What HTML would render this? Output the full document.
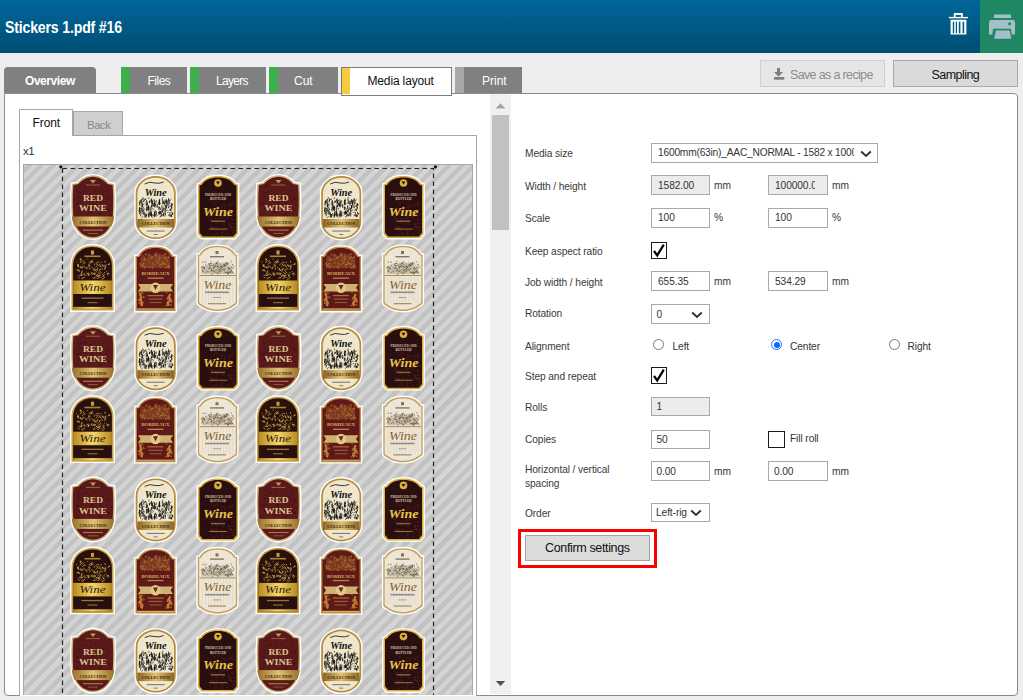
<!DOCTYPE html>
<html><head><meta charset="utf-8"><style>
*{box-sizing:border-box;margin:0;padding:0}
html,body{width:1023px;height:700px;overflow:hidden;background:#eeeeee;font-family:"Liberation Sans",sans-serif;position:relative}
.a{position:absolute;white-space:nowrap}
#hdr{left:0;top:0;width:1023px;height:53px;background:linear-gradient(#00669a,#004e74)}
#title{left:5px;top:17.6px;color:#fff;font-weight:bold;font-size:16.5px;letter-spacing:-0.2px;transform:scaleX(0.855);transform-origin:0 0}
#prn{left:980px;top:0;width:43px;height:53px;background:#1f8763}
.tab{position:absolute;top:67px;height:26px;background:#808080}
.tab .bar{position:absolute;left:0;top:0;width:9px;height:100%;background:#3cb04a}
.tt{position:absolute;font-size:12px;color:#fff;white-space:nowrap}
.btn{position:absolute;border:1px solid #b5b5b5;background:#dedede}
#panel{left:4px;top:93px;width:1014px;height:603px;background:#fff;border:1px solid #8a8a8a;border-radius:0 4px 4px 4px}
.lbl{position:absolute;left:525px;font-size:10.2px;color:#3a3a3a;letter-spacing:-0.1px;white-space:nowrap}
.inp{position:absolute;height:20px;border:1px solid #a9a9a9;background:#fff}
.inp.dis{background:#ececec}
.it{position:absolute;font-size:10.2px;color:#333;letter-spacing:-0.1px;white-space:nowrap}
.chk{position:absolute;width:16px;height:17px;border:1px solid #1a1a1a;background:#fff}
.rad{position:absolute;width:11px;height:11px;border:1px solid #777;border-radius:50%;background:#fff}
</style></head><body>
<div id="hdr" class="a"></div>
<div id="title" class="a">Stickers 1.pdf #16</div>
<div id="prn" class="a"></div>
<svg class="a" style="left:0;top:0" width="1023" height="53" viewBox="0 0 1023 53">
<g fill="#fff">
<path d="M953.8,13 h9 v3.9 h-1.8 v-2 h-5.4 v2 h-1.8z"/>
<rect x="948.8" y="16.9" width="19.2" height="1.4"/>
<path fill-rule="evenodd" d="M950.6,19.8 h15.8 v14.8 h-15.8z M952.8,21.8 v11.4 h1.4 v-11.4z M955.8,21.8 v11.4 h1.2 v-11.4z M958.8,21.8 v11.4 h1.6 v-11.4z M962.6,21.8 v11.4 h1.6 v-11.4z"/>
</g>
<g fill="#a3bfca">
<path d="M994.2,14.4 h16.6 l0.5,3.6 h-17.6z"/>
<path d="M992,19.9 h21 a2,2 0 0 1 2,2 v12.6 h-3.3 l-0.8,-5.7 h-17.8 l-0.8,5.7 h-3.3 v-12.6 a2,2 0 0 1 2,-2z"/>
<path d="M996,30.4 h13.6 l1.8,8.4 h-17.2z"/>
</g>
<circle cx="1009.6" cy="23.7" r="1.5" fill="#1f8763"/>
</svg>
<div class="tab" style="left:4px;width:92px;border-radius:4px 4px 0 0"></div>
<div class="tt" style="left:25px;top:74.1px;font-size:12px;font-weight:bold;letter-spacing:-0.45px">Overview</div>
<div class="tab" style="left:121px;width:66px"><div class="bar"></div></div>
<div class="tt" style="left:147.5px;top:74.1px;font-size:12px;letter-spacing:-0.5px">Files</div>
<div class="tab" style="left:190px;width:76px"><div class="bar"></div></div>
<div class="tt" style="left:216px;top:74.1px;font-size:12px;letter-spacing:-0.7px">Layers</div>
<div class="tab" style="left:269px;width:69px"><div class="bar"></div></div>
<div class="tt" style="left:294px;top:74.1px;font-size:12px;">Cut</div>
<div class="tab" style="left:455px;width:67px"><div class="bar" style="background:#a8a8a8"></div></div>
<div class="tt" style="left:482px;top:74.1px;font-size:12px;">Print</div>
<div class="btn" style="left:760px;top:60px;width:125px;height:27px;background:#e6e6e6;border-color:#cfcfcf"></div>
<svg class="a" style="left:773px;top:67px" width="13" height="14" viewBox="0 0 13 14"><path d="M4,1 h3 v4 h3 l-4.5,4.8 l-4.5,-4.8 h3z" fill="#808080"/><rect x="1" y="10" width="10.3" height="2.7" fill="#808080"/></svg>
<div class="tt" style="left:790px;top:67.9px;font-size:12.5px;color:#8c8c8c;letter-spacing:-0.65px">Save as a recipe</div>
<div class="btn" style="left:893px;top:60px;width:125px;height:27px;border-color:#a9a9a9;background:#dadada"></div>
<div class="tt" style="left:931.5px;top:67.9px;font-size:12.5px;color:#111;letter-spacing:-0.55px">Sampling</div>
<div id="panel" class="a"></div>
<div class="tab" style="left:341px;top:67px;width:111px;height:29px;background:#fff;border:1px solid #7c7c7c"><div class="bar" style="background:#f8c93a;left:0;top:0;width:8px;height:26px"></div></div>
<div class="tt" style="left:367.5px;top:74.1px;font-size:12px;color:#111;letter-spacing:-0.15px">Media layout</div>
<div class="a" style="left:490px;top:94px;width:21px;height:600px;background:#f0f0f0"></div>
<div class="a" style="left:492px;top:115px;width:17px;height:115px;background:#c1c1c1"></div>
<svg class="a" style="left:490px;top:94px" width="21" height="600" viewBox="0 0 21 600"><path d="M5.6,14.4 L10.5,9.2 L15.4,14.4z" fill="#a3a3a3"/><path d="M5.8,586.9 L15.2,586.9 L10.5,592z" fill="#505050"/></svg>
<div class="lbl" style="top:148.0px;">Media size</div>
<div class="inp" style="left:651px;top:143px;width:227px;height:20px"></div>
<div class="it" style="left:658px;top:147.4px;font-size:10.2px;width:196px;overflow:hidden;letter-spacing:-0.2px">1600mm(63in)_AAC_NORMAL - 1582 x 10000</div>
<svg class="a" style="left:859.5px;top:149.5px" width="12" height="8" viewBox="0 0 12 8"><path d="M1.2,1.5 L6,6 L10.8,1.5" fill="none" stroke="#333" stroke-width="2"/></svg>
<div class="lbl" style="top:180.9px;">Width / height</div>
<div class="inp dis" style="left:651px;top:175px;width:59px;height:20px"></div>
<div class="it" style="left:658px;top:180.2px;font-size:10.2px;">1582.00</div>
<div class="it" style="left:714px;top:180.2px;font-size:10.2px;">mm</div>
<div class="inp dis" style="left:768px;top:175px;width:60px;height:20px"></div>
<div class="it" style="left:775px;top:180.2px;font-size:10.2px;width:40px;overflow:hidden">100000.0</div>
<div class="it" style="left:832px;top:180.2px;font-size:10.2px;">mm</div>
<div class="lbl" style="top:212.8px;">Scale</div>
<div class="inp" style="left:651px;top:208px;width:59px;height:20px"></div>
<div class="it" style="left:658px;top:212.4px;font-size:10.2px;">100</div>
<div class="it" style="left:714px;top:212.0px;font-size:10.2px;">%</div>
<div class="inp" style="left:768px;top:208px;width:60px;height:20px"></div>
<div class="it" style="left:775px;top:212.4px;font-size:10.2px;">100</div>
<div class="it" style="left:832px;top:212.0px;font-size:10.2px;">%</div>
<div class="lbl" style="top:246.0px;">Keep aspect ratio</div>
<div class="chk" style="left:651px;top:242px;width:16px;height:17px"></div><svg class="a" style="left:651px;top:242px" width="16" height="17" viewBox="0 0 16 17"><path d="M3,9 L6.2,13.4 L12.8,2.6" fill="none" stroke="#000" stroke-width="2.2"/></svg>
<div class="lbl" style="top:277.0px;">Job width / height</div>
<div class="inp" style="left:651px;top:271px;width:59px;height:20px"></div>
<div class="it" style="left:658px;top:276.4px;font-size:10.2px;">655.35</div>
<div class="it" style="left:714px;top:276.2px;font-size:10.2px;">mm</div>
<div class="inp" style="left:768px;top:271px;width:60px;height:20px"></div>
<div class="it" style="left:775px;top:276.4px;font-size:10.2px;">534.29</div>
<div class="it" style="left:832px;top:276.2px;font-size:10.2px;">mm</div>
<div class="lbl" style="top:308.4px;">Rotation</div>
<div class="inp" style="left:651px;top:304px;width:59px;height:20px"></div>
<div class="it" style="left:656.5px;top:308.8px;font-size:10.2px;">0</div>
<svg class="a" style="left:691px;top:310.5px" width="12" height="8" viewBox="0 0 12 8"><path d="M1.2,1.5 L6,6 L10.8,1.5" fill="none" stroke="#333" stroke-width="2"/></svg>
<div class="lbl" style="top:341.4px;">Alignment</div>
<div class="rad" style="left:653px;top:339px"></div>
<div class="it" style="left:672.5px;top:341.1px;font-size:10.2px;">Left</div>
<div class="rad" style="left:771px;top:339px;border-color:#1d74ff"></div><div class="a" style="left:773.5px;top:341.5px;width:6px;height:6px;border-radius:50%;background:#0a6cff"></div>
<div class="it" style="left:790px;top:341.1px;font-size:10.2px;">Center</div>
<div class="rad" style="left:889px;top:339px"></div>
<div class="it" style="left:907.5px;top:341.1px;font-size:10.2px;">Right</div>
<div class="lbl" style="top:371.1px;">Step and repeat</div>
<div class="chk" style="left:651px;top:367px;width:16px;height:17px"></div><svg class="a" style="left:651px;top:367px" width="16" height="17" viewBox="0 0 16 17"><path d="M3,9 L6.2,13.4 L12.8,2.6" fill="none" stroke="#000" stroke-width="2.2"/></svg>
<div class="lbl" style="top:401.6px;">Rolls</div>
<div class="inp dis" style="left:651px;top:396.5px;width:59px;height:19px"></div>
<div class="it" style="left:656.5px;top:401.4px;font-size:10.2px;">1</div>
<div class="lbl" style="top:433.9px;">Copies</div>
<div class="inp" style="left:651px;top:429.5px;width:59px;height:19px"></div>
<div class="it" style="left:656.5px;top:433.6px;font-size:10.2px;">50</div>
<div class="chk" style="left:768px;top:431px;width:17px;height:17px"></div>
<div class="it" style="left:790px;top:432.7px;font-size:10.2px;">Fill roll</div>
<div class="lbl" style="top:463.6px;">Horizontal / vertical</div>
<div class="lbl" style="top:478.2px;">spacing</div>
<div class="inp" style="left:651px;top:461px;width:59px;height:20px"></div>
<div class="it" style="left:656.5px;top:466.1px;font-size:10.2px;">0.00</div>
<div class="it" style="left:714px;top:465.8px;font-size:10.2px;">mm</div>
<div class="inp" style="left:768px;top:461px;width:60px;height:20px"></div>
<div class="it" style="left:774px;top:466.1px;font-size:10.2px;">0.00</div>
<div class="it" style="left:832px;top:465.8px;font-size:10.2px;">mm</div>
<div class="lbl" style="top:507.6px;">Order</div>
<div class="inp" style="left:651px;top:502.5px;width:59px;height:19px"></div>
<div class="it" style="left:656px;top:506.8px;font-size:10.2px;width:31px;overflow:hidden">Left-right</div>
<svg class="a" style="left:689.5px;top:508.5px" width="12" height="8" viewBox="0 0 12 8"><path d="M1.2,1.5 L6,6 L10.8,1.5" fill="none" stroke="#333" stroke-width="2"/></svg>
<div class="a" style="left:518px;top:529px;width:139px;height:39px;border:3px solid #ff0000"></div>
<div class="btn" style="left:525px;top:535px;width:125px;height:26px;border-color:#a5a5a5;background:#dcdcdc"></div>
<div class="tt" style="left:545px;top:540.7px;font-size:12.5px;color:#111;letter-spacing:-0.35px">Confirm settings</div>
<div class="a" style="left:19px;top:135px;width:458px;height:561px;border:1px solid #a6a6a6;border-bottom:none;background:#fff"></div>
<div class="a" style="left:19px;top:109px;width:54px;height:27px;border:1px solid #a6a6a6;border-bottom:none;background:#fff"></div>
<div class="a" style="left:73px;top:111px;width:50px;height:24px;border:1px solid #a6a6a6;border-bottom:none;background:#cfcfcf"></div>
<div class="tt" style="left:32.5px;top:116.1px;font-size:12px;color:#111;letter-spacing:-0.1px">Front</div>
<div class="tt" style="left:87px;top:118.6px;font-size:11.5px;color:#8a8a8a;letter-spacing:-0.5px">Back</div>
<div class="tt" style="left:23px;top:144.6px;font-size:11.5px;color:#333;letter-spacing:-0.4px">x1</div>
<div class="a" style="left:23px;top:164px;width:450px;height:531px;background:repeating-linear-gradient(135deg,#d4d4d4 0,#d4d4d4 2.846px,#c2c2c2 2.846px,#c2c2c2 7.23px,#d4d4d4 7.23px,#d4d4d4 8.75px)"></div>
<svg class="a" style="left:23px;top:164px" width="450" height="531" viewBox="23 164 450 531">
<defs><linearGradient id="gg" x1="0" x2="1" y1="0" y2="0"><stop offset="0" stop-color="#8c6424"/><stop offset="0.5" stop-color="#e2c271"/><stop offset="1" stop-color="#8c6424"/></linearGradient><linearGradient id="gy" x1="0" x2="1" y1="0" y2="0"><stop offset="0" stop-color="#b88a22"/><stop offset="0.5" stop-color="#f5d66a"/><stop offset="1" stop-color="#b88a22"/></linearGradient><pattern id="st" patternUnits="userSpaceOnUse" x="0" y="0" width="12.375" height="12.375"><rect x="-1" y="-1" width="15" height="15" fill="#d4d4d4"/><polygon points="5.9,-0.5 12.1,-0.5 -0.5,12.1 -0.5,5.9" fill="#c2c2c2"/><polygon points="12.875,4.9 12.875,11.1 11.1,12.875 4.9,12.875" fill="#c2c2c2"/></pattern><clipPath id="c1"><path d="M24,1.8 C30.5,2 36,5 39.5,9.5 L45,10.5 C45.8,21 45.8,31 45.2,42 C44.2,56 35,65.2 24,65.2 C13,65.2 3.8,56 2.8,42 C2.2,31 2.2,21 3,10.5 L8.5,9.5 C12,5 17.5,2 24,1.8Z"/></clipPath><g id="t1">
<path d="M24,1.8 C30.5,2 36,5 39.5,9.5 L45,10.5 C45.8,21 45.8,31 45.2,42 C44.2,56 35,65.2 24,65.2 C13,65.2 3.8,56 2.8,42 C2.2,31 2.2,21 3,10.5 L8.5,9.5 C12,5 17.5,2 24,1.8Z" fill="#cdb074" stroke="#fff" stroke-width="2.8" paint-order="stroke"/>
<path d="M24,1.8 C30.5,2 36,5 39.5,9.5 L45,10.5 C45.8,21 45.8,31 45.2,42 C44.2,56 35,65.2 24,65.2 C13,65.2 3.8,56 2.8,42 C2.2,31 2.2,21 3,10.5 L8.5,9.5 C12,5 17.5,2 24,1.8Z" fill="#5a1a1c" transform="translate(24,33.5) scale(0.935,0.955) translate(-24,-33.5)"/>
<path d="M22.3,28.8l2.1,-0.2M24.3,29.6l-1.6,0.1M28.7,35.8l-2.0,-1.0M9.3,36.3l1.0,-2.3M41.4,40.9l0.8,0.6M11.7,12.5l0.1,-2.2M12.8,19.3l-2.3,-0.2M21.9,37.3l0.1,0.7M24.0,31.9l-0.2,-1.1M41.9,41.9l1.7,1.0M17.3,18.9l-1.1,-2.1M33.6,24.0l1.7,-0.6M40.5,37.4l-2.5,-1.5M38.8,26.1l2.4,-0.5M8.6,30.9l1.4,-1.2M9.1,22.0l2.3,1.3M10.2,19.4l-2.0,-2.2M34.7,17.3l0.3,-0.3M12.9,34.0l-1.8,0.7M10.2,24.6l-1.4,-1.2M41.0,36.1l-1.0,1.9M13.6,23.8l1.8,0.7M9.6,41.7l-1.4,-1.2M33.8,21.9l-1.0,-2.1M9.2,29.5l-1.3,0.5M19.4,25.6l2.3,-0.1M26.7,38.0l-1.6,-1.7M38.7,36.5l-1.3,-1.6M32.6,40.2l-1.5,2.3M37.8,30.1l-0.4,-2.0M7.4,40.9l-1.3,1.0M15.3,36.7l0.5,-1.0M12.3,33.6l-2.2,-1.4M26.1,37.6l0.6,-1.1M39.0,18.1l-2.4,-1.2M22.0,13.8l-1.6,-0.7M26.6,15.9l-0.7,2.0M41.3,31.7l1.0,0.4M11.1,13.1l-2.4,2.1M31.2,40.9l-2.4,0.7M23.4,33.9l-0.9,2.5M8.7,28.4l1.2,2.0M32.5,33.1l1.5,2.1M18.7,32.6l2.0,1.9M21.0,35.7l1.8,0.4M28.5,23.5l0.4,0.5M8.9,31.2l2.5,1.9M32.2,23.7l1.2,0.4M21.9,37.2l-2.1,1.3M7.1,30.0l-0.1,-1.3M31.1,26.9l0.6,2.1M15.2,12.3l-1.0,0.9M13.3,17.1l2.0,0.8M21.9,38.8l-0.9,0.8M13.1,24.9l1.5,2.1M37.7,23.5l0.4,-0.9M10.9,26.9l1.7,1.7M31.6,40.5l-1.1,-1.7M22.2,20.3l-1.4,-0.4M28.5,26.8l-0.9,1.7M41.4,25.6l-2.1,-2.3M37.4,13.2l1.0,0.4M17.1,35.7l-2.4,-1.8M22.4,12.7l1.6,-1.3M11.1,13.4l0.6,-0.3M28.7,31.7l1.5,2.3M30.6,18.0l-0.1,-1.6M6.4,26.2l1.1,-1.6M15.8,22.4l1.0,0.1M28.1,34.7l-0.5,1.5" stroke="#360a0c" stroke-width="0.9" opacity="0.7" fill="none"/>
<g clip-path="url(#c1)"><rect x="0" y="43" width="48" height="10" fill="url(#gg)"/></g>
<path d="M21,6.5 h6 l-3,3.5z" fill="#c09a50"/>
<rect x="17" y="11" width="14" height="1" fill="#a07a40" opacity="0.8"/>
<text x="24" y="27.5" font-family="Liberation Serif" font-weight="bold" font-size="9" fill="#dcc48c" text-anchor="middle" textLength="20" lengthAdjust="spacingAndGlyphs">RED</text>
<text x="24" y="37.8" font-family="Liberation Serif" font-weight="bold" font-size="9" fill="#dcc48c" text-anchor="middle" textLength="28" lengthAdjust="spacingAndGlyphs">WINE</text>
<text x="24" y="50.8" font-family="Liberation Serif" font-weight="bold" font-size="4.8" fill="#2a1808" text-anchor="middle" textLength="27" lengthAdjust="spacingAndGlyphs">COLLECTION</text>
<rect x="14" y="56" width="20" height="1.2" fill="#c08a50" opacity="0.8"/>
<rect x="19" y="59.5" width="10" height="0.9" fill="#c08a50" opacity="0.6"/>
</g><g id="t2">
<rect x="2" y="2" width="40" height="63" rx="20" ry="17" fill="#b48a3c" stroke="#fff" stroke-width="2.8" paint-order="stroke"/>
<rect x="3.7" y="3.7" width="36.6" height="59.6" rx="18.3" ry="15.4" fill="#efe6cc"/>
<path d="M11,10 q5,-3 10,-1 q4,1 9,-1" stroke="#222" stroke-width="0.9" fill="none"/>
<text x="22" y="21.5" font-family="Liberation Serif" font-style="italic" font-weight="bold" font-size="11" fill="#111" text-anchor="middle" textLength="22" lengthAdjust="spacingAndGlyphs">Wine</text>
<path d="M26.1,36.6l0.3,3.9M29.9,39.7l-0.5,2.7M36.6,35.0l0.4,1.8M21.0,28.2l0.0,2.9M5.9,27.7l-0.2,3.8M30.8,26.7l0.3,1.8M25.9,26.2l-0.5,3.7M12.4,27.7l0.5,3.7M15.0,40.3l0.0,3.2M12.3,40.0l0.2,3.9M35.0,29.1l-0.1,1.9M10.3,25.1l-0.2,3.0M5.6,35.5l-0.2,2.3M32.5,32.2l-0.2,2.7M28.8,25.0l0.5,1.6M30.2,38.4l-0.5,3.5M17.6,33.8l-0.5,1.6M11.5,40.2l-0.3,3.4M36.2,40.0l-0.2,2.4M22.8,37.2l-0.4,3.4M31.8,38.6l-0.5,3.9M8.5,29.8l0.1,3.8M16.7,39.7l0.0,2.3M16.0,27.0l-0.4,1.9M28.2,40.9l-0.3,1.6M38.1,33.1l-0.1,2.1M25.1,38.0l-0.0,2.6M7.3,39.6l-0.5,2.7M33.2,26.2l0.2,3.9M26.3,37.4l-0.4,2.6M10.4,38.4l-0.2,2.6M38.5,38.5l0.5,2.6M21.6,36.4l-0.0,2.2M18.8,26.5l-0.1,4.0M37.2,34.7l-0.0,2.3M8.4,28.6l0.3,3.7M17.4,37.4l0.3,3.2M27.4,36.9l-0.1,3.3M14.8,32.3l0.3,3.2M15.2,40.1l0.1,3.0M5.9,33.3l-0.2,3.2M20.8,37.9l0.1,3.5M17.0,34.9l0.2,3.6M17.1,38.3l0.4,3.2M37.7,40.3l0.0,2.8M11.0,38.2l0.4,2.7M28.3,36.2l0.2,1.9M31.3,33.9l0.2,2.6M26.1,37.2l0.1,3.3M6.4,26.7l-0.1,3.1M12.7,35.7l0.1,1.6M21.1,27.8l-0.4,1.8M16.0,27.1l-0.3,1.6M20.9,30.5l0.1,3.0M13.3,39.4l-0.5,2.5M14.7,31.0l-0.4,3.6M17.8,24.6l0.1,1.7M23.5,29.8l0.1,3.9M32.5,31.1l0.3,3.1M17.7,26.4l0.1,2.9M37.1,40.5l0.1,2.4M35.0,24.0l-0.4,2.9M25.8,26.4l0.1,3.7M17.9,31.3l-0.3,2.2M37.6,30.5l0.5,3.8M25.2,28.4l0.5,2.7M19.2,29.4l0.5,2.7M15.0,32.1l-0.4,3.1M20.1,29.0l0.3,3.6M5.9,33.1l-0.2,3.8M31.3,28.2l-0.2,1.9M38.1,29.0l0.1,2.7M26.8,34.3l0.2,1.8M30.6,29.1l0.0,2.3M15.3,33.0l-0.0,2.4M30.1,34.0l-0.5,2.1M20.5,39.6l0.4,2.9M6.0,37.2l-0.1,2.9M28.9,34.7l-0.0,3.8M18.2,30.7l0.4,2.0M15.3,38.1l-0.4,3.6M28.4,31.4l-0.2,3.5M35.6,26.4l-0.0,2.9M21.9,29.6l-0.3,3.0M32.3,25.2l-0.3,3.5M31.6,35.3l-0.5,3.3M37.8,41.0l0.2,1.6M33.3,27.7l0.1,3.9M29.0,26.3l-0.2,3.8M10.4,34.4l-0.1,1.9M26.0,24.7l-0.4,2.4M7.9,25.0l0.1,3.4M34.5,26.3l-0.1,2.3M25.3,32.3l0.4,2.4M7.3,35.9l-0.3,3.1M22.2,39.5l0.1,3.1M14.2,33.4l-0.2,3.4M22.6,26.3l-0.3,2.4M29.8,27.0l0.2,3.1M8.3,35.4l-0.4,1.8M25.1,28.1l0.4,2.7M16.2,37.5l-0.5,3.3M7.3,26.6l0.5,3.2M12.9,26.0l0.5,3.2M32.6,26.4l0.1,2.4M13.3,29.7l0.1,2.4M18.2,26.3l0.3,3.1M32.0,31.4l0.4,2.8M25.1,33.7l0.2,2.5M8.7,24.6l-0.3,1.6M34.8,32.2l0.3,1.5M21.0,39.1l0.1,2.6M20.9,25.7l-0.3,1.9M17.9,30.6l0.4,1.9M13.9,28.7l-0.3,2.2M13.3,32.2l-0.5,3.8M17.7,39.9l0.2,3.2M21.1,40.1l-0.4,3.2M15.1,35.5l0.2,1.9M12.1,24.4l-0.3,1.7" stroke="#0a0a0a" stroke-width="0.8" opacity="0.95" fill="none"/><path d="M31.4,39.8l-0.1,-1.0M6.0,36.9l-0.1,1.1M17.9,38.9l-1.0,1.3M29.4,32.5l0.2,0.8M12.2,35.0l1.3,-1.0M31.7,37.3l1.5,-0.7M9.0,39.4l1.3,-0.2M9.0,28.5l0.6,-0.9M36.4,35.6l-1.3,0.7M17.5,41.8l1.8,0.1M26.6,37.6l1.3,2.1M6.9,31.5l0.4,-0.9M24.9,26.6l1.7,0.1M9.7,36.9l-0.8,-1.3M21.5,27.5l-1.3,1.6M28.3,25.2l1.2,-2.1M16.7,41.3l0.5,-0.9M18.1,32.0l-1.6,2.2M7.7,32.6l1.1,-0.4M37.4,29.4l2.1,1.7M27.4,41.0l-0.2,1.5M31.5,34.3l-0.1,0.9M19.1,26.5l1.1,-1.0M21.6,39.1l-1.4,-2.1M10.0,35.6l-0.6,-1.1M20.4,41.7l-1.1,-0.4M34.1,36.0l-1.0,-0.1M21.3,27.6l-0.5,-0.9M31.8,30.8l0.7,2.1M35.5,31.8l0.5,-0.8M18.7,33.8l1.3,1.9M15.3,25.1l-0.2,-1.9M7.0,38.9l-1.7,1.0M17.6,41.9l1.6,-1.9M12.2,42.1l0.5,-0.3M31.0,39.6l-0.0,-0.1M9.2,31.5l-1.6,0.6M25.4,27.6l0.6,-1.8M9.4,36.6l-0.2,1.8M26.1,37.6l-1.6,1.5M8.7,36.1l1.8,1.8M34.6,33.1l0.9,1.3M10.4,42.0l1.8,-0.3M30.9,33.0l-1.0,0.9M8.0,39.4l2.1,-0.9M36.1,26.5l1.6,-1.0M36.9,32.8l1.9,-2.1M8.7,39.7l0.6,0.2M7.0,28.1l-0.6,-2.0M37.8,38.8l2.0,0.9M17.0,26.4l1.0,-1.7M23.5,33.4l-0.0,-1.9M8.4,34.4l-2.1,0.1M10.8,30.1l-1.5,0.3M18.4,29.0l-1.2,0.3M35.1,32.5l-1.5,-0.8M13.7,35.3l1.3,0.3M12.0,30.9l-0.5,-0.3M18.7,43.0l0.2,0.7M28.9,36.6l1.3,-0.6M27.3,42.5l-1.5,0.6M18.3,26.1l-2.0,1.1M9.7,37.8l-1.8,-0.6M7.0,34.8l1.3,-1.2M24.1,41.6l-0.9,-0.1M29.2,40.6l-1.5,0.7M9.8,27.0l2.1,-2.0M35.4,38.5l0.8,1.0M26.8,30.2l-0.2,-1.3M33.5,39.0l1.3,-1.3M25.0,29.6l1.3,1.1M37.8,37.7l0.8,1.2M9.0,35.7l-2.1,-0.6M9.7,42.1l-2.1,1.9M36.3,32.8l1.5,-2.0M10.5,25.2l-1.9,-2.2M32.5,26.6l0.4,-1.0M10.2,32.5l-1.4,2.1M18.3,35.7l0.3,0.6M21.4,29.9l-1.6,1.7M12.2,33.1l1.4,0.3M36.3,39.6l0.1,-1.7M25.0,33.5l1.6,0.1M28.2,39.6l-0.1,1.5M34.8,27.8l1.8,1.6M33.4,31.1l-1.1,-1.6M17.9,40.4l-0.6,-2.2M15.8,26.5l0.5,1.2M35.7,26.6l-0.5,-1.6M35.1,40.1l0.1,2.0" stroke="#111" stroke-width="0.7" opacity="0.9" fill="none"/>
<rect x="3.7" y="45" width="36.6" height="8.5" fill="url(#gg)"/>
<text x="22" y="51.3" font-family="Liberation Serif" font-weight="bold" font-size="4.6" fill="#2a1a08" text-anchor="middle" textLength="28" lengthAdjust="spacingAndGlyphs">COLLECTION</text>
<rect x="13" y="56.5" width="18" height="1.1" fill="#333" opacity="0.6"/>
<rect x="20" y="60" width="4" height="1" fill="#333" opacity="0.6"/>
</g><g id="t3">
<path d="M22,2.5 C30,2.5 36,5 39.5,10 L42,11 L42,60.5 L38.5,64.5 L5.5,64.5 L2,60.5 L2,11 L4.5,10 C8,5 14,2.5 22,2.5Z" fill="#d9ae3a" stroke="#fff" stroke-width="2.8" paint-order="stroke"/>
<path d="M22,2.5 C30,2.5 36,5 39.5,10 L42,11 L42,60.5 L38.5,64.5 L5.5,64.5 L2,60.5 L2,11 L4.5,10 C8,5 14,2.5 22,2.5Z" fill="#2a0f10" transform="translate(22,33.5) scale(0.925,0.952) translate(-22,-33.5)"/>
<path d="M18.5,49.6l0.7,-0.1M19.8,53.7l1.5,0.1M27.6,31.4l-2.5,-0.6M29.8,24.8l1.5,-1.3M20.3,23.7l2.5,1.2M37.6,46.6l-2.3,-0.9M27.4,26.6l2.3,-0.7M18.2,54.7l-1.9,2.1M26.2,44.1l-0.8,-0.1M19.0,23.5l1.8,-1.3M35.1,30.3l2.3,2.0M34.4,52.5l0.4,1.1M17.3,41.1l1.6,-1.5M38.9,57.5l-0.5,-0.7M26.2,37.4l2.5,-0.6M14.7,25.7l1.1,2.5M27.4,41.7l0.3,1.2M20.0,46.4l0.3,0.6M18.9,28.8l-0.8,2.1M23.4,45.9l-1.0,-2.0M15.8,54.5l1.4,-0.6M32.5,49.0l2.0,2.3M25.0,61.6l2.3,0.5M37.8,41.6l-0.6,-1.3M37.7,28.5l-2.2,1.5M34.9,41.3l1.7,-2.2M21.0,33.6l-0.4,-1.6M15.9,35.5l2.0,2.4M34.1,41.2l-1.2,2.3M28.2,51.1l-2.4,-1.4M36.6,53.8l1.9,0.5M25.5,45.2l1.7,-1.0M28.4,33.0l1.3,-2.4M32.5,60.2l-2.4,0.5M31.4,56.1l0.4,-1.2M25.0,60.3l2.0,-1.8M16.6,25.8l-2.4,-0.3M17.8,56.7l0.8,-1.9M28.5,35.0l-0.0,-1.4M18.5,29.4l-0.6,1.0M28.9,23.8l1.1,1.9M34.9,53.6l-2.5,-0.2M15.7,52.6l-1.6,1.1M20.8,49.9l-0.9,-2.3M24.5,34.4l2.0,-1.0M27.6,44.0l2.2,-2.0M30.2,42.3l1.2,2.3M22.4,50.0l0.1,0.3M15.7,54.6l2.4,-0.7M22.6,61.7l-2.0,-2.1M16.0,54.6l1.3,-0.3M30.8,22.8l0.7,-0.3M28.0,37.6l-0.5,-1.4M15.3,39.4l-1.3,1.0M36.1,51.0l-0.2,-1.3M24.4,41.5l0.7,2.3M16.3,41.2l-0.0,1.1M38.0,53.2l0.6,1.3M32.0,56.4l1.0,0.9M20.6,58.7l-0.6,0.6M36.3,60.5l2.4,-2.5M22.4,34.5l-0.5,-1.8M28.9,25.2l-1.0,2.2M34.0,40.5l-2.0,2.3M33.0,30.2l-0.8,0.7M32.4,32.4l2.3,-0.9M20.9,55.8l-1.7,0.9M19.4,45.9l-1.1,-0.6M39.4,40.7l-0.3,0.6M21.6,29.0l-0.6,-1.1M19.1,60.4l-2.3,1.6M39.2,50.2l-2.4,0.0M15.1,46.3l1.0,-1.3M14.2,43.8l-2.0,-1.0M26.3,57.8l-0.6,-1.8M35.4,54.9l0.1,-2.3M19.1,38.1l0.3,-1.4M35.7,55.7l2.1,1.9M14.5,45.3l-2.1,2.0M34.2,52.4l-1.6,-2.2" stroke="#6e2626" stroke-width="0.8" opacity="0.75" fill="none"/>
<circle cx="22" cy="9.5" r="3.8" fill="#d8b040"/>
<path d="M20,8 h4 l-2,3z" fill="#2a0f10"/>
<text x="22" y="22" font-family="Liberation Serif" font-weight="bold" font-size="3.8" fill="#d8c8a8" text-anchor="middle" textLength="26" lengthAdjust="spacingAndGlyphs">PRODUCED AND</text>
<text x="22" y="26.5" font-family="Liberation Serif" font-weight="bold" font-size="3.8" fill="#d8c8a8" text-anchor="middle" textLength="16" lengthAdjust="spacingAndGlyphs">BOTTLED</text>
<text x="22" y="42" font-family="Liberation Serif" font-style="italic" font-weight="bold" font-size="13" fill="#e6c24a" text-anchor="middle" textLength="30" lengthAdjust="spacingAndGlyphs">Wine</text>
<rect x="15" y="47" width="14" height="1.4" fill="#c8a060" opacity="0.6"/>
<rect x="13" y="55" width="18" height="1.1" fill="#c89040" opacity="0.7"/>
</g><g id="t4">
<path d="M2,22 C2,10 11,2 23,2 C35,2 44,10 44,22 L44,67 L2,67 Z" fill="#c9a040" stroke="#fff" stroke-width="2.8" paint-order="stroke"/>
<path d="M3.6,22 C3.6,11 12,3.6 23,3.6 C34,3.6 42.4,11 42.4,22 L42.4,65.4 L3.6,65.4 Z" fill="#28100f"/>
<rect x="21.5" y="7" width="3" height="4" fill="#c8a040"/>
<rect x="15" y="12" width="16" height="1.6" fill="#c8a040" opacity="0.8"/>
<path d="M7.4,18.1l-0.6,1.0M11.6,18.1l-1.4,1.3M11.9,30.1l0.8,-1.9M24.7,24.5l-0.5,2.6M10.1,16.4l2.3,-0.5M13.6,22.3l-0.7,2.4M13.9,20.1l0.4,0.2M38.5,31.9l-0.8,-1.5M34.6,34.8l-2.4,1.2M35.7,28.4l-1.5,1.5M31.1,19.7l0.7,-1.5M8.4,22.4l-0.9,-0.5M28.3,31.9l2.4,2.5M39.8,31.0l-1.0,-1.7M27.6,26.4l0.9,-2.1M13.4,33.5l0.5,1.0M10.2,23.6l2.1,0.8M39.7,19.7l-0.2,1.6M21.7,31.0l0.3,-2.0M10.3,34.7l-2.0,-1.6M18.1,29.6l1.8,-0.1M23.4,31.0l-1.2,-0.7M27.2,28.1l-2.4,-2.0M11.6,29.8l1.0,2.5M32.3,20.8l1.4,2.5M18.5,16.2l-0.6,-1.1M12.8,16.9l-2.0,1.9M8.6,27.7l-1.5,-1.6M34.1,21.7l-1.6,-0.2M29.9,26.0l1.9,-0.5M24.3,29.6l-0.2,1.1M22.4,18.5l-2.0,1.5M31.6,33.9l1.0,0.4M12.5,32.2l-2.0,-0.4M11.6,23.2l-1.0,-0.4M30.5,26.3l-1.3,1.4M31.3,31.7l-2.4,0.6M36.5,20.9l-1.5,1.6M19.0,23.6l1.7,-0.6M13.5,20.1l-0.8,1.0M19.2,30.7l-2.3,-1.3M27.6,25.1l-0.0,2.3M16.2,19.4l-2.4,-0.1M16.8,25.0l-2.6,-2.6M19.5,30.4l-1.0,2.1M26.1,23.7l1.4,-1.4M27.0,32.1l0.2,-0.9M10.2,26.9l-1.6,-0.7M24.9,33.9l0.9,0.1M35.3,21.9l-0.6,0.9M25.3,20.2l-0.5,1.7M15.0,29.4l-2.3,2.4M29.6,22.2l2.5,1.5M9.0,20.7l-0.0,2.6M11.6,16.9l-1.0,-2.4M20.5,26.2l-0.3,-1.9M7.8,31.3l-0.3,-0.1M22.8,29.0l2.1,1.7M31.0,22.4l-1.7,-2.1M35.3,17.1l0.4,2.1M17.6,23.4l-0.4,2.3M29.6,31.9l-2.4,1.2M21.9,23.6l1.6,1.2M37.0,30.0l2.1,-0.4M25.4,30.9l-0.2,-1.9M26.3,32.6l1.9,-1.9M19.6,20.3l-0.8,2.4M20.9,22.0l-1.2,-0.3M29.1,22.5l-1.6,-1.4M15.6,33.2l-1.7,1.3M10.6,30.9l-1.2,1.5M21.3,17.5l-2.1,1.6M24.9,25.2l-0.8,1.0M22.9,17.2l0.5,-1.0M34.9,26.4l1.4,-2.0M30.3,27.6l1.8,2.0M25.2,27.2l1.4,-1.2M25.0,31.0l0.5,0.2M35.2,34.5l-1.3,-2.2M27.2,18.8l2.4,-0.1M24.6,31.5l1.9,-1.9M22.0,19.4l-0.2,-1.9M35.9,22.8l-0.6,2.1M34.2,22.4l-0.0,0.8M13.2,18.6l1.9,-1.8M30.4,30.0l0.5,-0.8M35.3,30.9l-2.2,2.1M28.0,21.5l-1.7,-2.1M33.8,32.1l-0.8,-1.7M9.4,23.9l-1.1,-2.3M16.8,31.6l-2.3,-0.5M24.0,19.1l-2.4,-2.2M11.7,34.5l1.9,1.1M36.7,22.2l-1.3,1.9M27.0,33.5l-0.7,-0.5M30.7,32.8l-1.7,-1.2M7.5,26.6l2.2,0.4M11.9,29.1l0.8,-2.1M37.2,28.5l-0.0,-0.8M12.3,24.9l-0.7,-1.4M28.3,28.6l2.4,2.4M22.4,29.6l-0.6,-0.3M25.7,34.6l-2.4,-0.2M18.1,31.3l2.3,-0.1M9.6,27.3l0.5,0.9M32.6,24.8l0.3,1.4M7.9,20.6l1.0,2.5M38.1,21.4l2.5,-1.1M21.9,19.0l0.5,-0.6M29.6,34.2l-1.9,0.8" stroke="#d8b048" stroke-width="0.75" opacity="0.95" fill="none"/>
<rect x="3.6" y="37" width="38.8" height="13.5" fill="url(#gy)"/>
<text x="23" y="47.5" font-family="Liberation Serif" font-style="italic" font-size="11" fill="#2a1a08" text-anchor="middle" textLength="26" lengthAdjust="spacingAndGlyphs">Wine</text>
<rect x="12" y="54" width="22" height="1.3" fill="#c8a050" opacity="0.7"/>
<rect x="18" y="58.5" width="10" height="1.2" fill="#c8a050" opacity="0.6"/>
<rect x="3.6" y="63.4" width="38.8" height="2" fill="url(#gy)"/>
</g><g id="t5">
<path d="M2,12 L4.5,12 C7.5,5.5 14,2.5 22,2.5 C30,2.5 36.5,5.5 39.5,12 L42,12 L42,67 L2,67 Z" fill="#c09048" stroke="#fff" stroke-width="2.8" paint-order="stroke"/>
<path d="M2,12 L4.5,12 C7.5,5.5 14,2.5 22,2.5 C30,2.5 36.5,5.5 39.5,12 L42,12 L42,67 L2,67 Z" fill="#5e1a19" transform="translate(22,34) scale(0.93,0.955) translate(-22,-34)"/>
<path d="M7,24 L7,14 L10,11 L13,14 L15,9 L19,12 L23,8 L27,12 L30,9 L33,13 L36,11 L37,24Z" fill="#a0602a" opacity="0.45"/>
<path d="M18.4,12.5l-1.3,1.7M24.3,19.4l0.2,-0.5M28.9,17.6l1.1,0.6M32.2,15.6l-1.4,-1.4M28.7,11.5l0.6,0.5M8.8,20.8l-1.9,1.5M32.2,12.2l0.9,0.9M10.8,19.0l-1.5,1.7M27.7,23.7l-1.8,-0.7M25.6,18.1l-1.3,1.6M32.4,13.5l-1.4,0.7M19.2,19.0l-0.0,-0.4M7.6,11.0l-0.2,0.9M19.8,20.2l0.2,1.5M26.7,13.8l-1.4,-1.7M8.2,21.9l1.5,1.0M10.3,18.9l-1.5,1.6M26.7,20.2l0.4,-0.3M32.5,23.4l-1.0,-0.3M29.0,19.2l-0.4,-0.2M36.0,13.1l-1.2,0.7M15.3,22.5l-0.7,1.7M18.4,22.3l1.0,0.9M13.4,11.5l-1.9,-1.3M27.0,10.0l-1.1,0.3M11.7,13.9l-1.1,0.7M10.6,24.0l0.4,0.9M23.6,16.5l1.9,1.6M31.7,9.4l0.4,1.8M26.1,16.7l0.6,-1.3M28.8,20.8l-1.7,0.0M24.9,14.3l0.7,1.7M34.2,13.6l-1.4,1.4M25.4,21.4l1.5,-0.9M24.6,13.5l1.2,0.8M14.2,16.5l0.4,-1.1M12.5,16.1l-1.7,-0.0M35.2,21.4l-1.8,1.3M28.5,19.6l-1.9,1.0M12.9,21.0l-0.7,-0.5M12.2,22.0l-1.1,1.5M22.4,11.2l0.6,0.1M7.8,21.4l-0.9,-1.9M30.0,19.9l-0.5,-1.3M22.8,17.8l0.8,-0.0M24.0,19.8l-1.2,-1.3M21.5,20.3l1.2,1.4M20.2,19.7l-1.6,-0.4M9.0,21.5l2.0,0.7M29.6,14.6l1.2,-1.7M18.1,14.3l1.5,-1.3M11.8,10.3l1.4,-0.7M34.1,13.7l1.3,-1.2M34.1,23.6l1.5,0.8M33.9,22.7l1.9,-0.9M32.5,20.7l-0.6,-1.3M34.0,16.1l0.1,1.5M21.5,12.8l0.7,0.1M15.2,19.4l1.6,-1.0M31.4,20.3l0.1,-1.2M26.9,13.2l-1.0,1.4M15.1,10.4l1.4,2.0M16.2,15.1l0.2,1.0M7.4,18.7l-1.1,1.7M19.4,23.2l-0.2,0.6M8.1,12.0l-0.8,-0.5M12.2,15.3l-1.6,0.3M35.9,21.9l0.5,1.9M28.9,18.5l-0.2,-1.7M33.8,22.4l1.2,0.8M31.4,23.4l1.9,1.1M7.5,23.2l0.3,-0.2M19.9,13.1l-1.9,0.5M25.5,10.3l1.7,1.6M32.9,17.1l-0.5,-0.1M18.1,23.3l1.7,1.6M22.6,16.7l0.7,-0.8M12.5,23.8l-0.9,-0.9M21.8,10.3l0.1,-1.4M31.9,10.2l1.2,-0.9M30.6,21.0l1.8,-1.3M36.5,11.2l-0.6,-2.0M21.8,10.2l0.2,1.7M30.5,18.7l-1.6,1.9M17.9,23.2l-1.4,-0.8M35.4,20.2l-1.3,-0.2M23.3,12.8l-1.1,-1.7M22.3,15.2l-0.6,-0.1M17.4,14.8l1.1,-1.4M9.9,15.7l-0.8,-0.1" stroke="#b87432" stroke-width="0.9" opacity="0.9" fill="none"/>
<text x="22" y="31.3" font-family="Liberation Serif" font-weight="bold" font-size="4.8" fill="#dcb060" text-anchor="middle" textLength="28" lengthAdjust="spacingAndGlyphs">BORDEAUX</text>
<rect x="14" y="33.5" width="16" height="1.3" fill="#d0a868" opacity="0.75"/>
<path d="M4.5,40 h35 l-2.5,3.8 l2.5,3.8 h-35 l2.5,-3.8z" fill="#cfb170"/>
<circle cx="22" cy="43.8" r="5.2" fill="#e0c888"/>
<path d="M19.5,41 h5 l-2.5,5z" fill="#6a2418"/>
<path d="M6,50 q3,3 0,6 q4,2 2,6 M37,50 q-3,3 0,6 q-4,2 -2,6" stroke="#c07a38" stroke-width="2.2" fill="none"/>
<path d="M7.5,56.0l1.4,-1.3M6.4,49.4l-1.5,-2.0M5.9,55.7l2.0,0.8M7.3,54.3l0.8,-0.7M5.4,59.9l0.5,-1.6M5.4,50.2l1.8,-1.6M8.8,61.6l-1.9,-0.5M7.9,60.9l-1.2,-1.0M6.5,49.6l0.7,1.3M7.6,49.5l0.9,0.9M8.9,53.3l1.3,0.5M8.5,56.0l-1.1,-0.2M9.8,57.9l-0.6,1.3M10.0,49.6l-1.4,-1.1M5.1,58.8l0.6,0.2M11.0,53.6l-1.2,-1.6M7.0,59.9l0.4,-1.8M7.6,49.6l0.5,-1.5" stroke="#c88438" stroke-width="0.9" opacity="0.9" fill="none"/>
<path d="M34.6,55.3l-1.7,-0.6M33.4,49.1l-0.9,-1.5M34.9,58.7l-1.9,0.5M33.8,59.3l0.9,-1.2M38.1,58.3l-1.7,-0.4M37.2,61.0l-1.3,-1.0M37.7,61.5l-1.6,-1.6M37.5,53.1l-0.5,1.5M37.5,57.6l1.5,0.9M37.9,57.4l0.4,-1.8M38.5,60.9l-0.6,0.5M33.1,55.5l0.5,-0.8M35.5,59.9l-1.4,-0.2M33.5,54.0l1.5,0.4M33.2,60.2l0.6,0.1M34.7,52.9l-1.3,0.5M33.3,61.3l-1.6,0.5M36.5,53.7l-0.9,-0.2" stroke="#c88438" stroke-width="0.9" opacity="0.9" fill="none"/>
<rect x="14" y="51" width="16" height="1.2" fill="#c89050" opacity="0.7"/>
<rect x="15" y="54.5" width="14" height="1.1" fill="#c89050" opacity="0.6"/>
<rect x="16" y="58" width="12" height="1.1" fill="#c89050" opacity="0.5"/>
<rect x="3.5" y="64.4" width="37" height="1.2" fill="#d8b060"/>
</g><g id="t6">
<path d="M1.8,10.5 L3.5,10.5 C7,4.5 13,1.8 21.5,1.8 C30,1.8 36,4.5 39.5,10.5 L41.2,10.5 L41.2,58 C41.2,60 40,61 38.5,61.5 C35,64.5 29,67 21.5,67 C14,67 8,64.5 4.5,61.5 C3,61 1.8,60 1.8,58 Z" fill="#c6a05c" stroke="#fff" stroke-width="2.8" paint-order="stroke"/>
<path d="M1.8,10.5 L3.5,10.5 C7,4.5 13,1.8 21.5,1.8 C30,1.8 36,4.5 39.5,10.5 L41.2,10.5 L41.2,58 C41.2,60 40,61 38.5,61.5 C35,64.5 29,67 21.5,67 C14,67 8,64.5 4.5,61.5 C3,61 1.8,60 1.8,58 Z" fill="#ede5d6" transform="translate(21.5,34.4) scale(0.93,0.955) translate(-21.5,-34.4)"/>
<rect x="19.5" y="7" width="3" height="3" fill="#8a7050"/>
<rect x="14" y="12" width="14" height="1.4" fill="#5a4a3a" opacity="0.7"/>
<path d="M6,30 L6,24 L10,21 L14,22 L18,18 L23,20 L28,18 L32,21 L36,22 L36,30Z" fill="#8a7a60" opacity="0.35"/>
<path d="M13.5,24.0l-1.4,1.3M13.2,24.6l1.7,-0.4M36.0,26.8l0.2,0.5M24.2,22.3l2.0,-0.4M36.5,28.2l-1.9,-1.0M20.8,27.8l-1.3,0.5M17.4,27.4l1.7,1.0M12.0,27.1l-0.2,1.3M20.6,28.9l1.9,1.3M31.6,27.8l0.4,-1.3M36.6,23.6l-1.9,-0.3M18.9,20.4l1.8,-1.6M34.0,24.6l-1.3,-0.6M20.0,19.4l1.1,0.6M36.5,28.0l1.1,2.0M34.9,25.7l0.2,0.1M31.2,29.1l1.3,1.4M6.8,23.0l-1.7,0.3M24.0,24.7l1.4,-1.1M28.6,25.0l-1.1,1.9M7.7,23.6l0.1,0.4M36.4,24.6l1.5,-0.8M20.9,19.8l0.6,-0.3M30.3,19.3l-0.1,1.8M6.3,25.9l0.7,0.9M23.3,24.0l1.8,-0.9M27.8,26.0l0.9,-0.1M6.5,27.3l-0.9,1.1M36.6,27.3l-0.4,1.4M18.0,21.8l0.3,0.6M27.3,24.6l-0.4,1.0M16.1,25.3l-2.0,-1.5M32.9,20.6l-0.3,-1.8M29.7,21.9l-1.8,-0.9M34.8,27.1l-2.0,1.8M8.2,23.8l0.1,1.1M10.4,27.9l-0.9,1.0M34.7,25.1l-2.0,0.7M19.5,26.8l1.1,-1.6M23.6,25.7l1.7,0.5M25.1,27.2l-1.4,1.4M24.0,25.6l-1.4,0.1M18.7,20.5l1.8,1.4M20.2,18.9l1.9,-1.5M21.7,24.8l1.4,0.6M24.7,24.2l1.9,1.3M17.0,27.5l1.8,-0.1M8.6,18.8l1.9,-1.2M30.9,20.3l-1.1,-1.4M31.3,19.1l-0.1,1.2M22.3,18.1l-1.9,1.3M15.3,19.0l0.1,1.1M15.4,19.6l-1.3,-0.1M30.2,19.0l1.0,0.7M23.3,22.6l-1.9,0.0M18.8,26.1l-1.8,-1.3M6.6,23.8l-1.8,0.1M19.5,22.0l-1.2,1.7M20.9,19.2l0.3,1.1M21.1,28.7l1.4,0.7M6.8,22.8l0.0,-1.3M21.5,26.0l1.0,1.0M29.2,21.6l0.4,0.0M29.5,19.5l-1.3,0.9M28.4,20.8l1.1,1.1M26.0,23.5l-1.8,-1.1M29.7,29.2l-1.3,-1.9M16.8,29.3l-1.1,1.7M30.3,28.1l2.0,0.7M12.1,23.2l-0.4,0.7M17.0,26.8l-1.9,-1.1M12.9,20.0l1.0,1.5M8.9,23.7l-2.0,-1.0M10.5,26.3l1.3,1.4M14.5,22.9l-1.1,0.7M13.1,27.2l-0.1,0.2M33.0,29.1l-0.9,0.9M14.5,18.1l1.4,-1.2M14.7,26.6l1.4,-0.4M28.2,22.8l-1.9,0.2M11.4,20.5l-0.4,0.6M12.8,20.6l0.3,-0.9M23.4,26.1l-0.8,1.6M36.0,18.5l-1.7,-1.6M21.2,21.6l0.9,1.9M20.1,21.3l-1.1,1.6M31.3,28.5l2.0,-0.2M29.2,22.0l-1.4,0.8M17.5,24.5l0.3,-1.0M6.7,26.9l1.0,1.1M16.1,22.0l0.5,-0.5M29.1,24.2l0.1,1.4M9.6,20.5l0.1,1.4M34.5,28.5l-1.2,-0.7M13.7,20.7l-1.3,-1.4M31.3,24.3l1.9,0.5M29.5,29.2l0.2,-1.1M18.6,23.3l-1.4,0.2M30.0,21.9l-1.9,-1.6M17.3,20.4l-0.1,1.9M13.2,22.2l0.4,-1.3M33.0,29.8l-1.9,-0.4M31.0,18.2l0.2,1.2M35.6,20.3l1.7,0.4M28.9,20.7l-1.8,-0.1M36.5,21.0l1.9,1.9M20.6,23.5l1.8,-1.9M23.9,20.1l1.0,-0.0M25.1,22.7l1.5,1.3M6.8,24.8l-1.1,1.7M34.3,27.5l0.7,1.6M13.7,21.5l1.6,0.6M15.0,28.2l0.7,-2.0M35.1,26.9l0.9,-1.7M6.5,18.9l1.0,-1.8M14.9,21.9l-0.4,-0.9M9.0,24.2l-1.7,-0.4M14.8,19.0l-1.6,0.9M8.3,24.0l0.5,1.6M24.9,27.4l1.5,-1.5M7.6,27.7l-0.9,-0.1M15.9,19.9l-0.4,-0.1M31.6,20.7l-1.6,0.4M32.8,23.0l-0.8,1.5M31.9,18.4l-1.6,0.4M18.4,23.9l-0.4,-1.5M29.7,28.7l0.4,-0.8M27.7,21.4l-1.6,0.4M23.8,28.7l-0.3,-1.5M23.6,18.7l-0.9,1.9" stroke="#5a4830" stroke-width="0.7" opacity="0.85" fill="none"/>
<rect x="3.5" y="31" width="36" height="1" fill="#a88a58"/><rect x="6" y="32.5" width="0.6" height="26" fill="#d8ccb4" opacity="0.6"/><rect x="9" y="32.5" width="0.6" height="26" fill="#d8ccb4" opacity="0.6"/><rect x="12" y="32.5" width="0.6" height="26" fill="#d8ccb4" opacity="0.6"/><rect x="15" y="32.5" width="0.6" height="26" fill="#d8ccb4" opacity="0.6"/><rect x="18" y="32.5" width="0.6" height="26" fill="#d8ccb4" opacity="0.6"/><rect x="21" y="32.5" width="0.6" height="26" fill="#d8ccb4" opacity="0.6"/><rect x="24" y="32.5" width="0.6" height="26" fill="#d8ccb4" opacity="0.6"/><rect x="27" y="32.5" width="0.6" height="26" fill="#d8ccb4" opacity="0.6"/><rect x="30" y="32.5" width="0.6" height="26" fill="#d8ccb4" opacity="0.6"/><rect x="33" y="32.5" width="0.6" height="26" fill="#d8ccb4" opacity="0.6"/><rect x="36" y="32.5" width="0.6" height="26" fill="#d8ccb4" opacity="0.6"/>
<text x="21.5" y="45" font-family="Liberation Serif" font-style="italic" font-size="12.5" fill="#8a6430" text-anchor="middle" textLength="28" lengthAdjust="spacingAndGlyphs">Wine</text>
<rect x="9" y="47.5" width="24" height="1.6" fill="#555" opacity="0.6"/>
<rect x="17" y="53" width="8" height="1" fill="#666" opacity="0.5"/>
<rect x="12" y="59" width="18" height="1.3" fill="#7a5a30" opacity="0.6"/>
</g></defs>
<rect x="23.5" y="164.5" width="449" height="540" fill="none" stroke="#a8a8a8" stroke-width="1"/>
<path d="M62.5,168.5 H433.5 V700 M62.5,168.5 V700" fill="none" stroke="#222" stroke-width="1.2" stroke-dasharray="4.5,3.5"/>
<circle cx="60.8" cy="166.8" r="1.6" fill="#111"/>
<circle cx="435.4" cy="166.8" r="1.6" fill="#111"/>
<use href="#t1" x="69.0" y="173.5"/><use href="#t2" x="133.7" y="174.0"/><use href="#t3" x="196.0" y="173.5"/><use href="#t1" x="254.5" y="173.5"/><use href="#t2" x="319.2" y="174.0"/><use href="#t3" x="381.5" y="173.5"/><use href="#t1" x="69.0" y="324.7"/><use href="#t2" x="133.7" y="325.2"/><use href="#t3" x="196.0" y="324.7"/><use href="#t1" x="254.5" y="324.7"/><use href="#t2" x="319.2" y="325.2"/><use href="#t3" x="381.5" y="324.7"/><use href="#t1" x="69.0" y="475.9"/><use href="#t2" x="133.7" y="476.4"/><use href="#t3" x="196.0" y="475.9"/><use href="#t1" x="254.5" y="475.9"/><use href="#t2" x="319.2" y="476.4"/><use href="#t3" x="381.5" y="475.9"/><use href="#t1" x="69.0" y="627.1"/><use href="#t2" x="133.7" y="627.6"/><use href="#t3" x="196.0" y="627.1"/><use href="#t1" x="254.5" y="627.1"/><use href="#t2" x="319.2" y="627.6"/><use href="#t3" x="381.5" y="627.1"/><use href="#t4" x="69.5" y="243.5"/><use href="#t5" x="133.5" y="244.0"/><use href="#t6" x="196.0" y="244.0"/><use href="#t4" x="255.0" y="243.5"/><use href="#t5" x="319.0" y="244.0"/><use href="#t6" x="381.5" y="244.0"/><use href="#t4" x="69.5" y="394.7"/><use href="#t5" x="133.5" y="395.2"/><use href="#t6" x="196.0" y="395.2"/><use href="#t4" x="255.0" y="394.7"/><use href="#t5" x="319.0" y="395.2"/><use href="#t6" x="381.5" y="395.2"/><use href="#t4" x="69.5" y="545.9"/><use href="#t5" x="133.5" y="546.4"/><use href="#t6" x="196.0" y="546.4"/><use href="#t4" x="255.0" y="545.9"/><use href="#t5" x="319.0" y="546.4"/><use href="#t6" x="381.5" y="546.4"/>
</svg>
</body></html>
